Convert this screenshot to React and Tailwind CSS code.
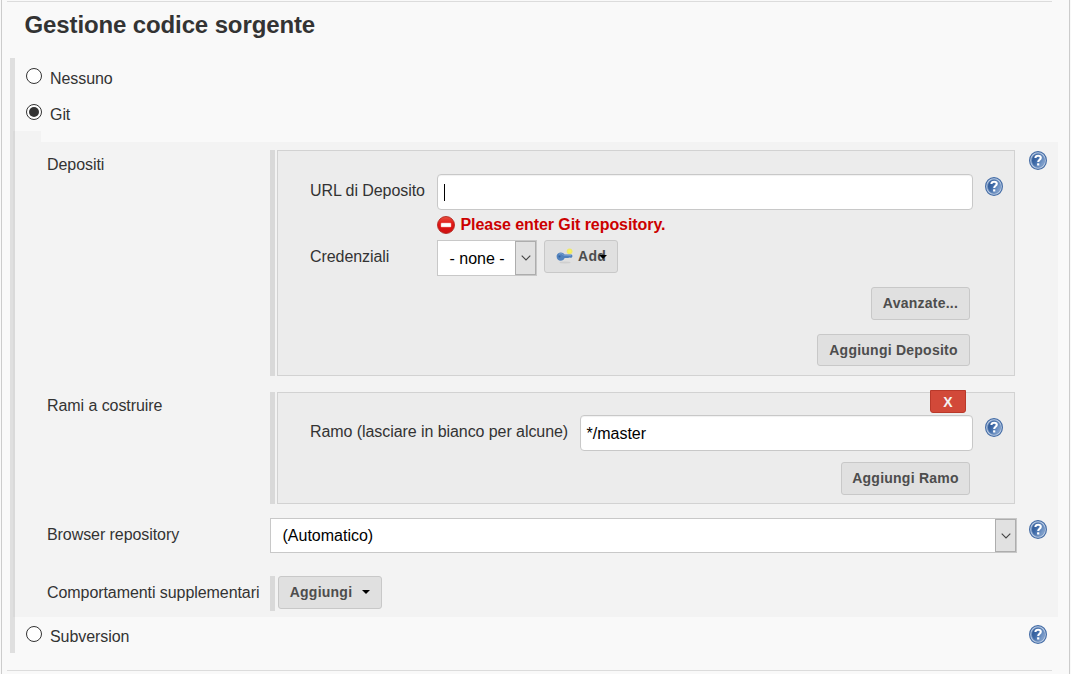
import React from "react";

function HelpIcon({ className = "" }) {
  return (
    <svg className={`block h-[19px] w-[18px] shrink-0 ${className}`} viewBox="0 0 18 19" aria-label="Aiuto">
      <defs>
        <linearGradient id="helpFill" x1="0" y1="0.2" x2="1" y2="0.8">
          <stop offset="0" stopColor="#2b5592" />
          <stop offset="0.4" stopColor="#3f6ba8" />
          <stop offset="1" stopColor="#91aed6" />
        </linearGradient>
      </defs>
      <ellipse cx="9" cy="9.5" rx="8.4" ry="8.9" fill="#bccde5" stroke="#456da6" strokeWidth="1.2" />
      <ellipse cx="9" cy="9.5" rx="6.5" ry="6.9" fill="url(#helpFill)" stroke="#6d8fbe" strokeWidth="0.8" />
      <path d="M6.4 7C6.5 5.3 7.6 4.7 9.1 4.7C10.7 4.7 11.8 5.500 11.8 6.800C11.8 8.700 9.2 8.800 9.2 11" fill="none" stroke="#fff" strokeWidth="2.1" />
      <rect x="8.100" y="12.300" width="2.200" height="2.200" fill="#fff" />
    </svg>
  );
}

function ErrorIcon() {
  return (
    <svg className="block h-[18px] w-[18px] shrink-0" viewBox="0 0 18 18">
      <defs>
        <linearGradient id="errorFill" x1="0" y1="0" x2="0" y2="1">
          <stop offset="0" stopColor="#e8503f" />
          <stop offset="0.45" stopColor="#e11414" />
          <stop offset="1" stopColor="#cf1010" />
        </linearGradient>
      </defs>
      <circle cx="9" cy="9" r="8.5" fill="url(#errorFill)" stroke="#b22a22" strokeWidth="0.9" />
      <rect x="4" y="7" width="10" height="4" rx="0.6" fill="#fff" stroke="#f0a8a0" strokeWidth="0.5" />
    </svg>
  );
}

function KeyIcon() {
  return (
    <svg className="block h-4 w-[17px] shrink-0" viewBox="0 0 17 16">
      <ellipse cx="9" cy="14.5" rx="5.5" ry="0.9" fill="#cfcfcf" />
      <circle cx="13.6" cy="3.300" r="2.900" fill="#f0e96a" />
      <circle cx="13.6" cy="3.300" r="1.400" fill="#f8f45c" />
      <path d="M0.600 8.500C0.600 5.900 2.500 4.400 4.800 4.400C6.900 4.400 8 5.400 8.500 6.500L15.600 6.600L16.600 7.900L15.600 9.800H14L13.200 9.400L12.300 10H8.600C7.900 11.800 6.600 12.700 4.700 12.700C2.400 12.700 0.600 10.900 0.600 8.500Z" fill="#5182bd" />
      <path d="M3 6.300C4.500 5.200 6.500 5.500 7.600 7.200L15 7.300" fill="none" stroke="#86aad6" strokeWidth="0.8" />
      <circle cx="3.500" cy="8.600" r="1" fill="#33619c" />
    </svg>
  );
}

function Radio({ checked = false }) {
  return (
    <span className="flex h-4 w-4 shrink-0 items-center justify-center rounded-full border border-[#333] bg-white">
      {checked && <span className="h-[10px] w-[10px] rounded-full bg-[#333]" />}
    </span>
  );
}

function RadioRow({ label, checked, children }) {
  return (
    <div className="flex h-9 items-start pl-[11px]">
      <div className="pt-[9px]">
        <Radio checked={checked} />
      </div>
      <span className="ml-2 pt-2">{label}</span>
      {children}
    </div>
  );
}

function Button({ children, className = "" }) {
  return (
    <button
      className={`flex h-[33px] shrink-0 items-center justify-center rounded-[3px] border border-[#c8c8c8] bg-[#e0e0e0] pb-px text-[14px] leading-none font-bold tracking-[0.24px] text-[#4d4d4d] ${className}`}
    >
      {children}
    </button>
  );
}

function Select({ value, className = "" }) {
  return (
    <div className={`flex border border-[#c8c8c8] bg-white tracking-normal text-black ${className}`}>
      <span className="flex-1 pl-[11.5px] whitespace-nowrap">{value}</span>
      <span className="flex w-[21px] items-center justify-center border border-[#adadad] bg-[#e1e1e1]">
        <svg className="h-[6px] w-[10px]" viewBox="0 0 10 6">
          <path d="M0.700 0.700L5 5L9.300 0.700" fill="none" stroke="#444" strokeWidth="1.100" />
        </svg>
      </span>
    </div>
  );
}

function Bar() {
  return <span className="w-[5px] shrink-0 bg-[#d9d9d9]" />;
}

function Caret({ className = "" }) {
  return (
    <svg className={`h-[4px] w-[8px] ${className}`} viewBox="0 0 8 4">
      <path d="M0 0H8L4 4Z" fill="#000" />
    </svg>
  );
}

const inputClass = "h-9 rounded-[4px] border border-[#c8c8c8] bg-white tracking-normal text-black shadow-[inset_0_1px_1px_rgba(0,0,0,0.06)]";

export default function App() {
  return (
    <div className="h-[674px] w-[1071px] overflow-hidden bg-[#f9f9f9] pl-px font-['Liberation_Sans',Arial,sans-serif] text-[16px] leading-6 tracking-[-0.07px] text-[#333]">
      <div className="h-full w-[1069px] border-x border-[#ccc] pt-px">
        <div className="ml-[5px] h-px w-[1045px] bg-[#dcdcdc]" />
        <h2 className="h-14 pt-[9px] pl-[22.5px] text-[24px] leading-7 font-bold tracking-[-0.12px]">Gestione codice sorgente</h2>

        <div className="ml-2 h-[595px] w-[1048px] border-l-[5px] border-[#dfdfdf] pt-px">
          <RadioRow label="Nessuno" />
          <RadioRow label="Git" checked />

          <div className="-ml-[2px] h-[11px] w-7 bg-black/[0.024]" />
          <div className="-ml-[2px] h-[475px] w-[1045px] bg-black/[0.024] pt-2 pl-[34px]">
            <div className="flex h-[226px]">
              <span className="w-[223px] pt-[3px]">Depositi</span>
              <div className="flex w-[745px] gap-[2px]">
                <Bar />
                <div className="flex-1 border border-[#d2d2d2] bg-[#ececec] pt-[23px] pl-8">
                  <div className="flex h-[42px]">
                    <span className="w-[127px] pt-[5px]">URL di Deposito</span>
                    <div className={`${inputClass} flex w-[536px] items-center pl-[6px]`}>
                      <span className="h-[17px] w-px bg-black" />
                    </div>
                    <HelpIcon className="mt-[3px] ml-3" />
                  </div>
                  <div className="flex h-6 pl-[127px]">
                    <ErrorIcon />
                    <span className="-mt-[3px] ml-[5.5px] font-bold text-[#c00]">Please enter Git repository.</span>
                  </div>
                  <div className="flex h-[47px]">
                    <span className="w-[127px] pt-[5px]">Credenziali</span>
                    <Select value="- none -" className="h-9 w-[100px] leading-[36px]" />
                    <Button className="relative ml-[7px] w-[74px]">
                      <KeyIcon />
                      <span className="ml-[5px]">Add</span>
                      <Caret className="absolute top-[14px] left-[54px]" />
                    </Button>
                  </div>
                  <div className="flex h-[47px] justify-end pr-11">
                    <Button className="w-[99px]">Avanzate...</Button>
                  </div>
                  <div className="flex justify-end pr-11">
                    <Button className="!h-8 w-[153px]">Aggiungi Deposito</Button>
                  </div>
                </div>
              </div>
              <HelpIcon className="mt-px ml-[14px]" />
            </div>

            <div className="mt-4 flex h-[112px]">
              <span className="w-[223px] pt-[2px]">Rami a costruire</span>
              <div className="flex w-[745px] gap-[2px]">
                <Bar />
                <div className="relative flex-1 border border-[#d2d2d2] bg-[#ececec] pt-[22px] pl-8">
                  <button className="absolute -top-[3px] right-12 flex h-[23px] w-9 items-center justify-center rounded-b-[3px] border border-[#b9392a] bg-[#d24939] text-[14px] leading-none font-bold text-[#f3f3f3]">
                    X
                  </button>
                  <div className="flex h-[47px]">
                    <span className="w-[270px] pt-[5px]">Ramo (lasciare in bianco per alcune)</span>
                    <div className={`${inputClass} w-[393px] pl-[5.5px] leading-[35px]`}>*/master</div>
                    <HelpIcon className="mt-[3px] ml-3" />
                  </div>
                  <div className="flex justify-end pr-11">
                    <Button className="w-[129px]">Aggiungi Ramo</Button>
                  </div>
                </div>
              </div>
            </div>

            <div className="mt-[14px] flex h-[35px]">
              <span className="w-[223px] pt-[5px]">Browser repository</span>
              <Select value="(Automatico)" className="w-[747px] leading-[34px]" />
              <HelpIcon className="mt-[2px] ml-3" />
            </div>

            <div className="mt-[23px] flex h-[35px]">
              <span className="w-[223px] pt-[5px] whitespace-nowrap">Comportamenti supplementari</span>
              <Bar />
              <Button className="ml-[3px] w-[104px]">
                Aggiungi
                <Caret className="ml-[10px]" />
              </Button>
            </div>
          </div>

          <RadioRow label="Subversion">
            <HelpIcon className="mt-[8px] mr-[11px] ml-auto" />
          </RadioRow>
        </div>

        <div className="mt-[17px] ml-[5px] h-px w-[1045px] bg-[#dcdcdc]" />
      </div>
    </div>
  );
}
